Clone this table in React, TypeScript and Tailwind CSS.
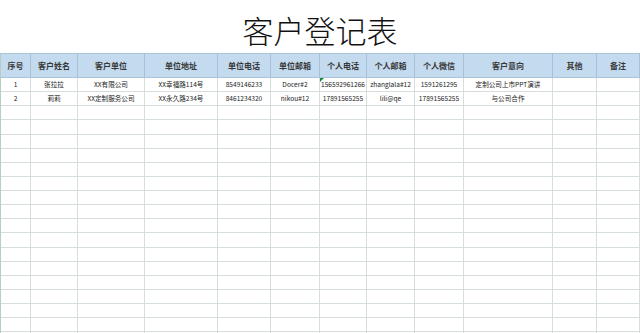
import React from "react";

const widths = [31, 47, 67, 73, 53, 49, 47, 48, 49, 89, 44, 43];
const headers = ["序号", "客户姓名", "客户单位", "单位地址", "单位电话", "单位邮箱", "个人电话", "个人邮箱", "个人微信", "客户意向", "其他", "备注"];
const data: string[][] = [
  ["1", "张拉拉", "XX有限公司", "XX幸福路114号", "8549146233", "Docer#2", "156592961266", "zhanglala#12", "1591261295", "定制公司上市PPT演讲", "", ""],
  ["2", "莉莉", "XX定制服务公司", "XX永久路234号", "8461234320", "nikou#12", "17891565255", "lili@qe", "17891565255", "与公司合作", "", ""],
];

const font = { fontFamily: '"Microsoft YaHei", "Noto Sans CJK SC", "Noto Sans", sans-serif' };

export default function App() {
  const rows: string[][] = [...data];
  while (rows.length < 19) rows.push(Array(12).fill(""));
  return (
    <div className="w-[640px] h-[333px] bg-white overflow-hidden" style={font}>
      <div className="h-[53px] pt-[14px] flex justify-center">
        <div className="text-[31px] leading-[31px] font-light text-[#111]">客户登记表</div>
      </div>
      <div className="border-l border-[#b5cdc6]">
        <div className="flex h-[25px] bg-[#c3daef] border-t border-b border-[#a9c4d8]">
          {headers.map((h, i) => (
            <div
              key={i}
              style={{ width: i === 0 ? widths[i] - 1 : widths[i] }}
              className="shrink-0 flex items-center justify-center border-r border-[#a6c2d8] text-[8px] font-bold text-[#383838] whitespace-nowrap"
            >
              {h}
            </div>
          ))}
        </div>
        {rows.map((r, ri) => (
          <div key={ri} className="flex h-[14.13px] border-b border-[#d6dedc]">
            {r.map((c, ci) => (
              <div
                key={ci}
                style={{ width: ci === 0 ? widths[ci] - 1 : widths[ci] }}
                className="relative shrink-0 flex items-center justify-center border-r border-[#d6dedc] text-[6.6px] text-[#222] whitespace-nowrap overflow-hidden"
              >
                {ri === 0 && ci === 6 && (
                  <span className="absolute left-0 top-0 w-0 h-0 border-t-[4px] border-r-[4px] border-t-[#1d8a3c] border-r-transparent" />
                )}
                {c}
              </div>
            ))}
          </div>
        ))}
      </div>
    </div>
  );
}
